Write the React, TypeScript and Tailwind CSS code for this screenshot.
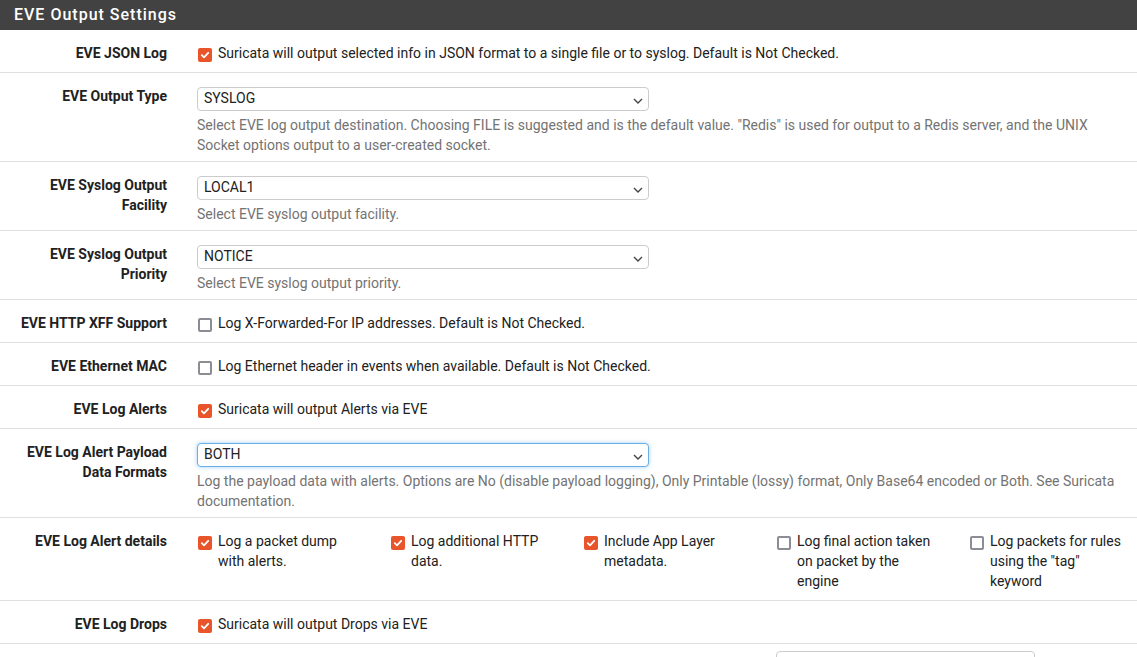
import React from "react";

const FONT = { fontFamily: "Roboto, 'Liberation Sans', sans-serif" };

function Check({ checked }: { checked: boolean }) {
  if (checked) {
    return (
      <span className="mt-[5px] ml-[1px] flex h-[14px] w-[14px] shrink-0 items-center justify-center rounded-[2px] bg-[#e8552b]">
        <svg width="10" height="10" viewBox="0 0 10 10">
          <path d="M1.8 5.2 L4 7.3 L8.2 2.8" fill="none" stroke="#fff" strokeWidth="1.8" strokeLinecap="round" strokeLinejoin="round" />
        </svg>
      </span>
    );
  }
  return <span className="mt-[5px] ml-[1px] block h-[14px] w-[14px] shrink-0 rounded-[2px] border-2 border-[#8c8c94] bg-white" />;
}

function Chevron() {
  return (
    <svg width="10" height="6" viewBox="0 0 10 6" className="absolute right-[5px] top-[10px]">
      <path d="M1 1 L5 5 L9 1" fill="none" stroke="#444" strokeWidth="1.4" />
    </svg>
  );
}

function Select({ value, focused }: { value: string; focused?: boolean }) {
  return (
    <div
      className={
        "relative mt-[4px] h-[24px] w-[452px] rounded-[4px] border bg-white pl-[6px] text-[14px] leading-[21px] text-[#212121] " +
        (focused ? "border-[#66afe9] shadow-[0_0_4px_rgba(102,175,233,0.6)]" : "border-[#cccccc]")
      }
    >
      {value}
      <Chevron />
    </div>
  );
}

function Row({ label, children, pb = "pb-[9px]" }: { label: React.ReactNode; children: React.ReactNode; pb?: string }) {
  return (
    <div className={"flex border-b border-[#e0e0e0] pt-[10px] " + pb}>
      <div className="w-[182px] shrink-0 px-[15px] pt-[3px] text-right text-[14px] font-bold leading-[20px] text-[#212121]">
        {label}
      </div>
      <div className="min-w-0 flex-1 pl-[15px] pr-[15px]">{children}</div>
    </div>
  );
}

function CheckLine({ checked, text }: { checked: boolean; text: string }) {
  return (
    <div className="flex items-start gap-[6px] pt-[3px] text-[14px] leading-[20px] text-[#212121]">
      <Check checked={checked} />
      <span>{text}</span>
    </div>
  );
}

function Help({ children }: { children: React.ReactNode }) {
  return <div className="mt-[4px] text-[14px] leading-[20px] text-[#737373]">{children}</div>;
}

export default function App() {
  const details: [boolean, string][] = [
    [true, "Log a packet dump with alerts."],
    [true, "Log additional HTTP data."],
    [true, "Include App Layer metadata."],
    [false, "Log final action taken on packet by the engine"],
    [false, 'Log packets for rules using the "tag" keyword'],
  ];
  return (
    <div className="min-h-screen w-[1137px] bg-white" style={FONT}>
      <div className="flex h-[30px] items-center bg-[#424242] pl-[14px] text-[16px] font-medium tracking-[1px] text-white">
        EVE Output Settings
      </div>
      <div>
        <Row label="EVE JSON Log">
          <CheckLine checked text="Suricata will output selected info in JSON format to a single file or to syslog. Default is Not Checked." />
        </Row>
        <Row label="EVE Output Type" pb="pb-[6px]">
          <Select value="SYSLOG" />
          <Help>
            Select EVE log output destination. Choosing FILE is suggested and is the default value. "Redis" is used for output to a Redis server, and the UNIX Socket options output to a user-created socket.
          </Help>
        </Row>
        <Row label="EVE Syslog Output Facility" pb="pb-[6px]">
          <Select value="LOCAL1" />
          <Help>Select EVE syslog output facility.</Help>
        </Row>
        <Row label="EVE Syslog Output Priority" pb="pb-[6px]">
          <Select value="NOTICE" />
          <Help>Select EVE syslog output priority.</Help>
        </Row>
        <Row label="EVE HTTP XFF Support">
          <CheckLine checked={false} text="Log X-Forwarded-For IP addresses. Default is Not Checked." />
        </Row>
        <Row label="EVE Ethernet MAC">
          <CheckLine checked={false} text="Log Ethernet header in events when available. Default is Not Checked." />
        </Row>
        <Row label="EVE Log Alerts">
          <CheckLine checked text="Suricata will output Alerts via EVE" />
        </Row>
        <Row label="EVE Log Alert Payload Data Formats" pb="pb-[6px]">
          <Select value="BOTH" focused />
          <Help>
            Log the payload data with alerts. Options are No (disable payload logging), Only Printable (lossy) format, Only Base64 encoded or Both. See Suricata documentation.
          </Help>
        </Row>
        <Row label="EVE Log Alert details">
          <div className="flex">
            {details.map(([c, t], i) => (
              <div key={i} className="w-[193px] shrink-0 pr-[30px]">
                <CheckLine checked={c} text={t} />
              </div>
            ))}
          </div>
        </Row>
        <Row label="EVE Log Drops">
          <CheckLine checked text="Suricata will output Drops via EVE" />
        </Row>
        <div className="flex pt-[7px] pb-[10px]">
          <div className="w-[182px] shrink-0" />
          <div className="pl-[15px]">
            <div className="ml-[579px] h-[24px] w-[259px] rounded-[4px] border border-[#cccccc] pl-[11px] text-[14px] leading-[22px] text-[#212121]">
              All
            </div>
          </div>
        </div>
      </div>
    </div>
  );
}
